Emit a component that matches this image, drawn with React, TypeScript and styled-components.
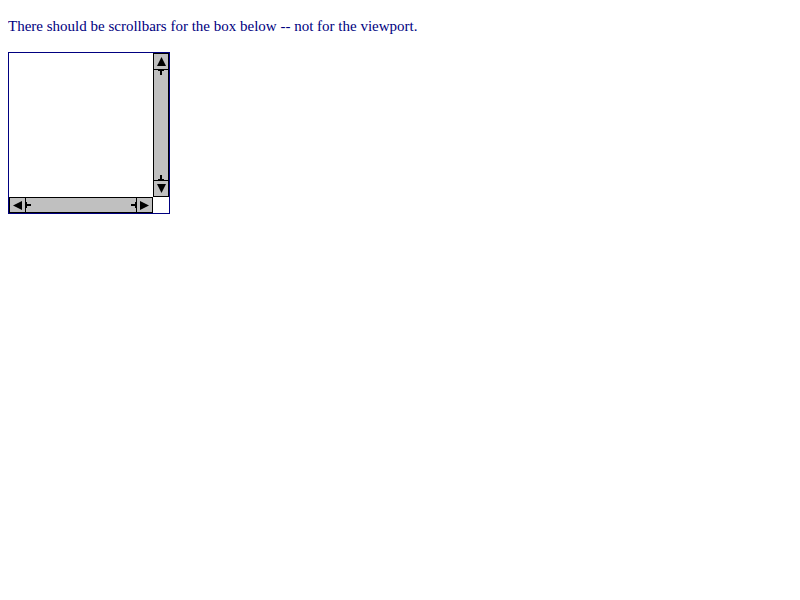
import React from "react";
import styled, { createGlobalStyle } from "styled-components";

const Global = createGlobalStyle`
  html { margin: 0; padding: 0; background: #fff; }
  body { margin: 8px; padding: 0; font-family: "Liberation Serif", "Times New Roman", serif; font-size: 15px; color: #000080; }
`;

const Note = styled.p`
  margin: 8px 0 16px;
  line-height: 20px;
  color: #000080;
`;

const Box = styled.div`
  width: 160px;
  height: 160px;
  border: 1px solid #000080;
  display: grid;
  grid-template-columns: 1fr 16px;
  grid-template-rows: 1fr 16px;
  background: #fff;
`;

const Content = styled.div`
  background: #fff;
`;

const Bar = styled.div<{ $vertical?: boolean }>`
  display: flex;
  flex-direction: ${(p) => (p.$vertical ? "column" : "row")};
  background: #c0c0c0;
`;

const Btn = styled.div`
  flex: 0 0 17px;
  width: ${"17px"};
  height: 17px;
  box-sizing: border-box;
  border: 1px solid #000;
  background: #c0c0c0;
  display: flex;
  align-items: center;
  justify-content: center;
`;

const VBtn = styled(Btn)`
  width: 16px;
`;

const HBtn = styled(Btn)`
  height: 16px;
`;

const Track = styled.div<{ $vertical?: boolean }>`
  flex: 1;
  box-sizing: border-box;
  display: flex;
  flex-direction: ${(p) => (p.$vertical ? "column" : "row")};
  justify-content: space-between;
  align-items: center;
  background: #c0c0c0;
  ${(p) =>
    p.$vertical
      ? "border-left: 1px solid #000; border-right: 1px solid #000;"
      : "border-top: 1px solid #000; border-bottom: 1px solid #000;"}
`;

const Corner = styled.div`
  background: #fff;
`;

type Dir = "up" | "down" | "left" | "right";

const arrowPts: Record<Dir, string> = {
  up: "4.5,0 9,9 0,9",
  down: "0,0 9,0 4.5,9",
  left: "9,0 9,9 0,4.5",
  right: "0,0 0,9 9,4.5",
};

function Arrow({ dir }: { dir: Dir }) {
  return (
    <svg width="9" height="9" viewBox="0 0 9 9">
      <polygon points={arrowPts[dir]} fill="#000" />
    </svg>
  );
}

function Tick({ dir }: { dir: Dir }) {
  const vertical = dir === "up" || dir === "down";
  if (vertical) {
    return (
      <svg width="8" height="5" viewBox="0 0 8 5">
        {dir === "up" ? (
          <>
            <rect x="1" y="0" width="6" height="1" fill="#000" />
            <rect x="3" y="0" width="2" height="5" fill="#000" />
          </>
        ) : (
          <>
            <rect x="3" y="0" width="2" height="5" fill="#000" />
            <rect x="1" y="4" width="6" height="1" fill="#000" />
          </>
        )}
      </svg>
    );
  }
  return (
    <svg width="5" height="8" viewBox="0 0 5 8">
      {dir === "left" ? (
        <>
          <rect x="0" y="1" width="1" height="6" fill="#000" />
          <rect x="0" y="3" width="5" height="2" fill="#000" />
        </>
      ) : (
        <>
          <rect x="0" y="3" width="5" height="2" fill="#000" />
          <rect x="4" y="1" width="1" height="6" fill="#000" />
        </>
      )}
    </svg>
  );
}

export default function App() {
  return (
    <>
      <Global />
      <Note>There should be scrollbars for the box below -- not for the viewport.</Note>
      <Box>
        <Content />
        <Bar $vertical>
          <VBtn>
            <Arrow dir="up" />
          </VBtn>
          <Track $vertical>
            <Tick dir="up" />
            <Tick dir="down" />
          </Track>
          <VBtn>
            <Arrow dir="down" />
          </VBtn>
        </Bar>
        <Bar>
          <HBtn>
            <Arrow dir="left" />
          </HBtn>
          <Track>
            <Tick dir="left" />
            <Tick dir="right" />
          </Track>
          <HBtn>
            <Arrow dir="right" />
          </HBtn>
        </Bar>
        <Corner />
      </Box>
    </>
  );
}
